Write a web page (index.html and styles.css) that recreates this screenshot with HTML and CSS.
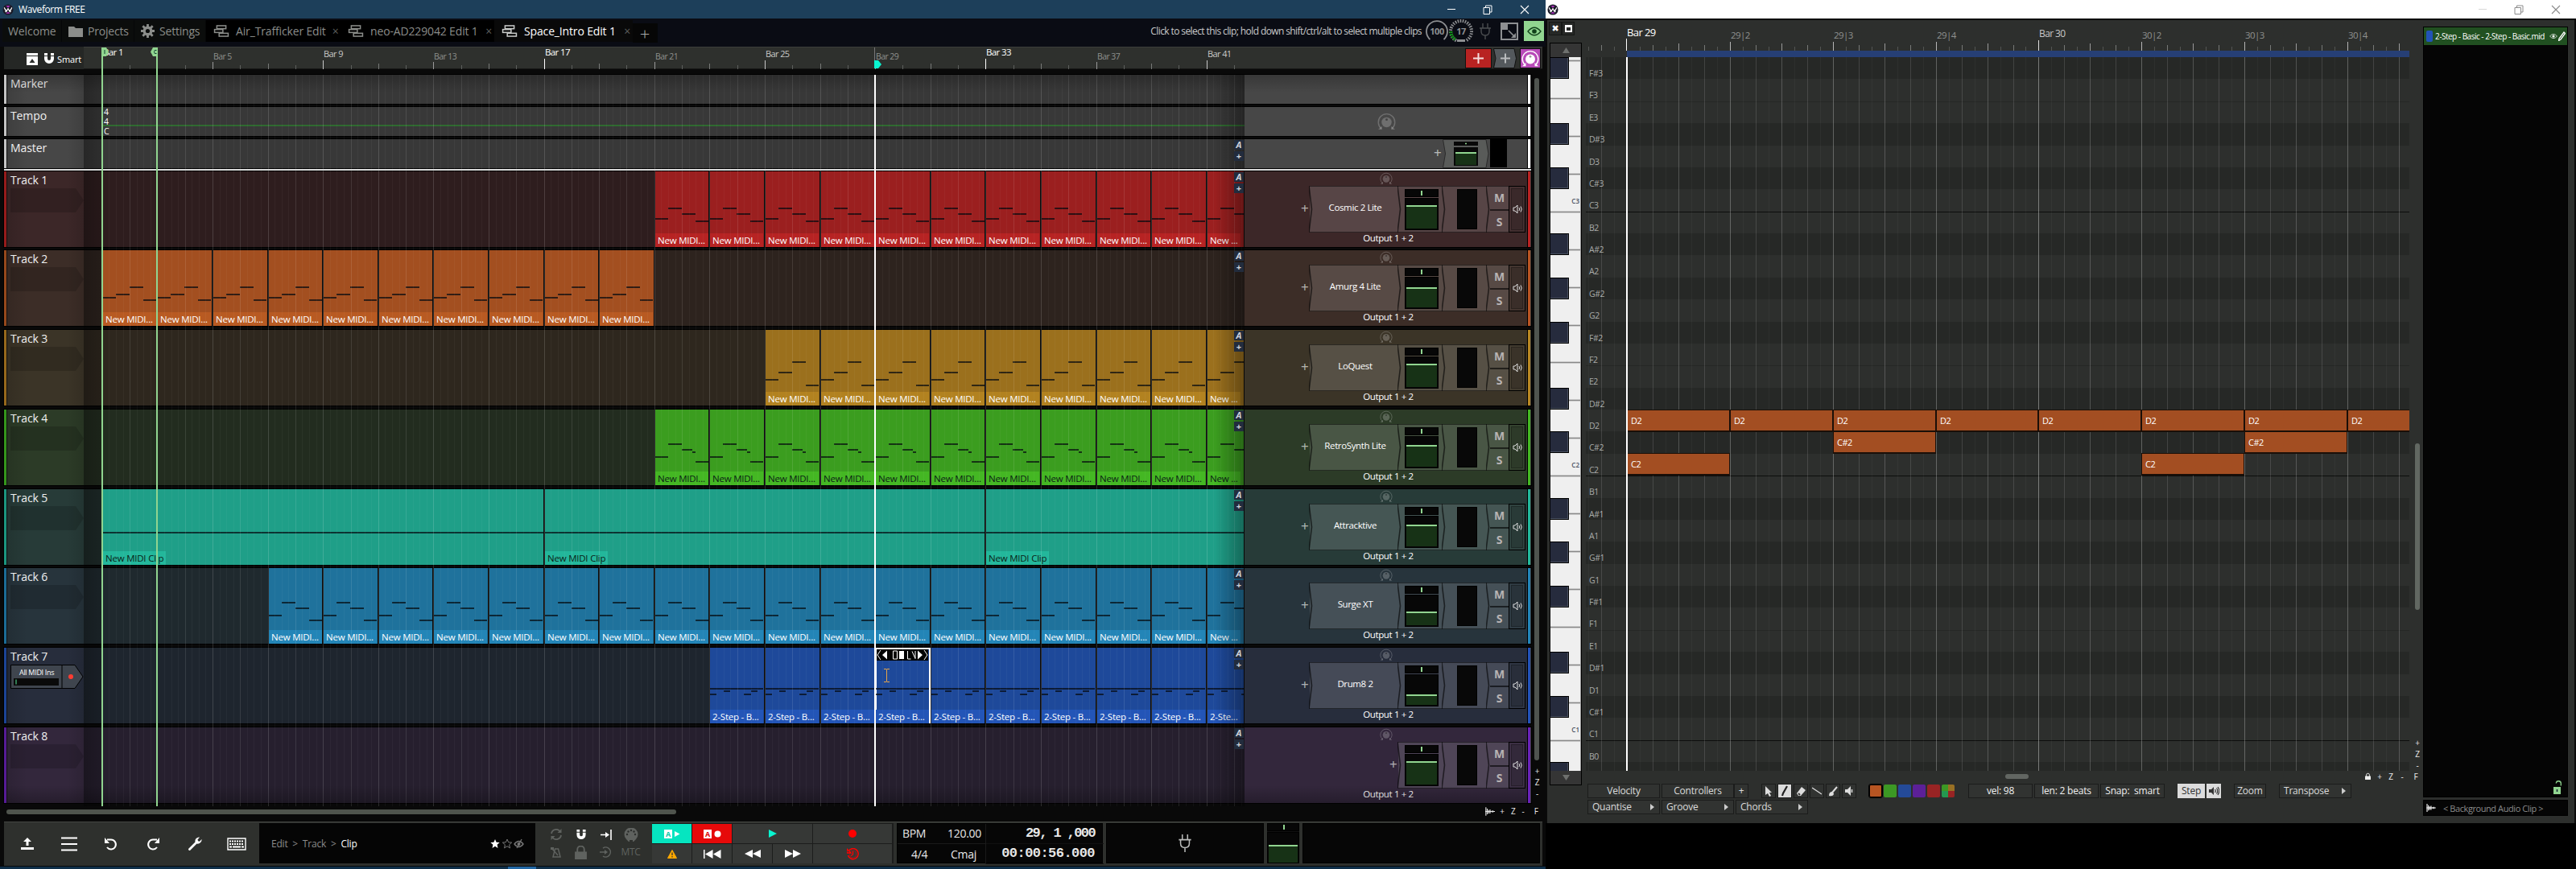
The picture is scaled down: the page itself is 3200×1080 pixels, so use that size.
FILE: index.html
```html
<!DOCTYPE html>
<html lang="en">
<head>
<meta charset="utf-8">
<title>Waveform FREE</title>
<link rel="stylesheet" href="styles.css">
</head>
<body>
<svg class="defs" width="0" height="0">
  <symbol id="i-logo" viewBox="0 0 16 16"><circle cx="8" cy="8" r="7.500" fill="#1b1b28"/><path d="M5 2.500h6L8 5z" fill="#c12fd0"/><path d="M5 13.500h6L8 11z" fill="#c12fd0"/><path d="M2.500 5l3 6L8 6.500l2.500 4.500 3-6M4 11l1.500-3M12 11l-1.500-3" fill="none" stroke="#fff" stroke-width="1.300"/></symbol>
  <symbol id="i-knob" viewBox="0 0 24 24"><circle cx="12" cy="12.500" r="6.500" fill="currentColor"/><circle cx="12" cy="9" r="1.500" class="knob-dot"/><path d="M5 20.500A10.700 10.700 0 1 1 19 20.500" fill="none" stroke="currentColor" stroke-width="1.500"/><path d="M1 22h5v-4.500zM23 22h-5v-4.500z" fill="currentColor"/></symbol>
  <symbol id="i-tracks" viewBox="0 0 20 16"><g fill="none" stroke="currentColor" stroke-width="1.600"><rect x="4" y="1" width="12" height="4"/><rect x="1" y="6" width="11" height="4"/><rect x="7" y="11" width="12" height="4"/></g></symbol>
  <symbol id="i-plug" viewBox="0 0 16 22"><path d="M5 1v6M11 1v6M1 7h14M3 7v4c0 3 2 5 5 5s5-2 5-5V7M8 16v5" fill="none" stroke="currentColor" stroke-width="1.400"/></symbol>
  <symbol id="i-eye" viewBox="0 0 18 12"><path d="M1 6q8-9.500 16 0q-8 9.500-16 0z" fill="none" stroke="currentColor" stroke-width="1.300"/><circle cx="9" cy="6" r="2.800" fill="currentColor"/></symbol>
  <symbol id="i-magnet" viewBox="0 0 14 14"><path d="M1 4v3a6 6 0 0 0 12 0V4H9v3a2 2 0 0 1-4 0V4zM1 0h4v3H1zM9 0h4v3H9z" fill="currentColor"/></symbol>
  <symbol id="i-speaker" viewBox="0 0 12 12"><path d="M1 4h2l3-3v10L3 8H1z" fill="none" stroke="currentColor"/><path d="M8 4q1.500 2 0 4M10 2.500q2.500 3.500 0 7" fill="none" stroke="currentColor"/></symbol>
  <symbol id="i-lock" viewBox="0 0 14 16"><path d="M0 7h14v9H0z" fill="currentColor"/><path d="M3 8V4.500a4 4 0 0 1 8 0V8" fill="none" stroke="currentColor" stroke-width="1.800"/></symbol>
  <symbol id="i-wave" viewBox="0 0 14 12"><path d="M1 0v12M3 2v8M5 4v5M7 3v6M9 5v2M11 4.500v3M13 5.500v1M0 6h14" fill="none" stroke="currentColor" stroke-width="1.300"/></symbol>
  <symbol id="i-restore" viewBox="0 0 12 12"><path d="M1 3.500h7.500V11.500H1zM3.500 3.500V1H11v8H8.500" fill="none" stroke="currentColor"/></symbol>
  <symbol id="i-close" viewBox="0 0 12 12"><path d="M1 1l10 10M11 1L1 11" fill="none" stroke="currentColor" stroke-width="1.100"/></symbol>
</svg>

<div class="desktop">
<section class="daw">
  <header class="titlebar">
    <svg class="logo"><use href="#i-logo"/></svg><span>Waveform FREE</span>
    <div class="winbtns"><i class="min"></i><svg><use href="#i-restore"/></svg><svg><use href="#i-close"/></svg></div>
  </header>

  <nav class="menubar">
    <div class="tab w1">Welcome</div>
    <div class="tab w2"><svg width="18" height="14" viewBox="0 0 18 14"><path d="M0 1h7l2 2h9v11H0z" fill="currentColor"/></svg>Projects</div>
    <div class="tab w3"><svg width="17" height="17" viewBox="0 0 18 18"><circle cx="9" cy="9" r="4.500" fill="none" stroke="currentColor" stroke-width="3.500"/><path d="M9 0v4M9 14v4M0 9h4M14 9h4M2.500 2.500l3 3M12.500 12.500l3 3M15.500 2.500l-3 3M5.500 12.500l-3 3" stroke="currentColor" stroke-width="3"/></svg>Settings</div>
    <div class="tab doc w4"><svg width="20" height="15"><use href="#i-tracks"/></svg>Air_Trafficker Edit<b>×</b></div>
    <div class="tab doc w5"><svg width="20" height="15"><use href="#i-tracks"/></svg>neo-AD229042 Edit 1<b>×</b></div>
    <div class="tab doc on w6"><svg width="20" height="15"><use href="#i-tracks"/></svg>Space_Intro Edit 1<b>×</b></div>
    <div class="tab add">+</div>
    <div class="status">
      <span class="hint">Click to select this clip; hold down shift/ctrl/alt to select multiple clips</span>
      <svg width="30" height="30" viewBox="0 0 30 30"><path d="M6.500 25A13 13 0 1 1 23.500 25" fill="none" stroke="#8d8f92" stroke-width="1.800"/><text x="15" y="19" class="gauge">100</text></svg>
      <svg width="30" height="30" viewBox="0 0 30 30"><path d="M9 26.500A13 13 0 1 1 21 26.500" fill="none" stroke="#8d8f92" stroke-width="4" stroke-dasharray="1.600 1.400"/><path d="M7.500 25A12.500 12.500 0 0 1 2.500 15" fill="none" stroke="#0a8a12" stroke-width="4" stroke-dasharray="2 1.200"/><path d="M10 25h10v3H10z" fill="#8d8f92"/><text x="15" y="19" class="gauge">17</text></svg>
      <svg class="plug" width="16" height="22"><use href="#i-plug"/></svg>
      <svg width="22" height="22" viewBox="0 0 22 22"><path d="M1 1h20v20H1z" fill="none" stroke="#8d8f92" stroke-width="2"/><path d="M1 1h8v8H1z" fill="#8d8f92"/><path d="M10 10l8 8" stroke="#8d8f92" stroke-width="1.700"/><path d="M13 19h6v-6z" fill="#8d8f92"/></svg>
      <div class="eyebtn"><svg width="18" height="12"><use href="#i-eye"/></svg></div>
    </div>
  </nav>

  <div class="ruler">
    <div class="snap">
      <svg width="14" height="15" viewBox="0 0 14 15"><path d="M0 0h14v3H0zM0 4h14v11H0z" fill="#fff"/><path d="M7 7l3.500 5h-7z" fill="#2d2f2d"/></svg>
      <svg width="14" height="14"><use href="#i-magnet"/></svg>Smart
    </div>
    <div class="ticks" id="ticks"></div>
    <div class="ruler-tools">
      <div class="rt red"><svg width="13" height="13" viewBox="0 0 13 13"><path d="M6.500 0v13M0 6.500h13" stroke="#fff" stroke-opacity=".85" stroke-width="2"/></svg></div>
      <svg width="29" height="25" viewBox="0 0 29 25"><path d="M.5.500H26l2.500 12L26 24.500H.500L3 12.500z" fill="#54595d" stroke="#111"/><path d="M15 6.500v12M9 12.500h12" stroke="#b9bcbe" stroke-width="2"/></svg>
      <div class="rt purple"><svg width="22" height="22"><use href="#i-knob"/></svg></div>
    </div>
  </div>

  <div class="arrange" id="arrange">
    <div class="rows" id="rows"></div>
    <div class="vscroll"><i></i><b>+</b><b>Z</b><b>-</b></div>
  </div>
  <div class="hscroll"><i></i><span class="zoomset"><svg width="12" height="11"><use href="#i-wave"/></svg><b>+</b><b>Z</b><b>-</b><b class="f">F</b></span></div>

  <footer class="transport">
    <div class="actions">
      <svg width="16" height="16" viewBox="0 0 16 16"><path d="M0 12h16v3H0zM8 0l5 5H9.500v5h-3V5H3z" fill="#fff"/></svg>
      <svg width="20" height="18" viewBox="0 0 20 18"><path d="M0 1.500h20M0 9h20M0 16.500h20" stroke="#fff" stroke-width="1.800"/></svg>
      <svg width="18" height="18" viewBox="0 0 18 18"><path d="M4 3.500h4.500a6 6 0 1 1-4.500 9.500" fill="none" stroke="#fff" stroke-width="2"/><path d="M1 1v7h6z" fill="#fff"/></svg>
      <svg width="18" height="18" viewBox="0 0 18 18"><path d="M14 3.500H9.500a6 6 0 1 0 4.500 9.500" fill="none" stroke="#fff" stroke-width="2"/><path d="M17 1v7h-6z" fill="#fff"/></svg>
      <svg width="18" height="18" viewBox="0 0 18 18"><path d="M1.500 14.500l8-8a5 5 0 0 1 5.500-6l-2.500 3 .5 1.800 2 .4L17.500 3a5 5 0 0 1-6 5.500l-8 8a1.400 1.400 0 0 1-2-2z" fill="#fff"/></svg>
      <svg width="24" height="16" viewBox="0 0 24 16"><path d="M1 1h22v14H1z" fill="none" stroke="#fff" stroke-width="1.400"/><path d="M3 4.500h18M3 8h18" stroke="#fff" stroke-width="2" stroke-dasharray="2 1"/><path d="M3 11.500h3M7 11.500h10M18 11.500h3" stroke="#fff" stroke-width="2"/></svg>
    </div>
    <div class="crumbs"><span>Edit&nbsp; &gt; &nbsp;Track&nbsp; &gt; &nbsp;<em>Clip</em></span>
      <svg width="42" height="14" viewBox="0 0 42 14"><path d="M6 1l1.600 3.800 4.100.3-3.100 2.700.9 4.100L6 9.700l-3.500 2.200.9-4.100L.300 5.100l4.100-.3z" fill="#fff"/><path d="M21 1l1.600 3.800 4.100.3-3.100 2.700.9 4.100L21 9.700l-3.500 2.200.9-4.100-3.100-2.700 4.100-.3z" fill="none" stroke="#777"/><path d="M30 7q5.500-7 11 0q-5.500 7-11 0zM33 12l6-11" fill="none" stroke="#777" stroke-width="1.300"/><circle cx="35.500" cy="7" r="2" fill="#777"/></svg>
    </div>
    <div class="modes">
      <svg width="14" height="14" viewBox="0 0 14 14"><path d="M1 6a6 6 0 0 1 10.500-3M13 8a6 6 0 0 1-10.500 3" fill="none" stroke="#5f625f" stroke-width="1.800"/><path d="M13.500 0v5h-5zM.500 14V9h5z" fill="#5f625f"/></svg>
      <svg class="lit" width="14" height="13"><use href="#i-magnet"/></svg>
      <svg width="14" height="13" viewBox="0 0 14 13"><path d="M0 6.500h9M13 0v13" stroke="#fff" stroke-width="1.600"/><path d="M6 3l5 3.500L6 10z" fill="#fff"/></svg>
      <svg width="18" height="17" viewBox="0 0 18 17"><path d="M3 14a8.500 8.500 0 1 1 12 0l-3 3h-1v-2H7v2H6z" fill="#5f625f"/><g fill="#2d2f2d"><circle cx="4" cy="8" r="1.200"/><circle cx="5.500" cy="4.500" r="1.200"/><circle cx="9" cy="3" r="1.200"/><circle cx="12.500" cy="4.500" r="1.200"/><circle cx="14" cy="8" r="1.200"/></g></svg>
      <svg width="14" height="14" viewBox="0 0 14 14"><path d="M3 13h9L9.500 3h-4zM2 3l7 8" fill="none" stroke="#5f625f" stroke-width="1.500"/><path d="M0 1h4v3H0z" fill="#5f625f"/></svg>
      <svg class="dim" width="15" height="17"><use href="#i-lock"/></svg>
      <svg width="15" height="14" viewBox="0 0 15 14"><path d="M4 2a6 6 0 1 1 0 10" fill="none" stroke="#5f625f" stroke-width="1.500"/><path d="M0 7h8" stroke="#5f625f" stroke-width="1.500"/><path d="M6 4l4 3-4 3z" fill="#5f625f"/></svg>
      <span>MTC</span>
    </div>
    <div class="buttons">
      <div class="cyan"><svg width="20" height="11" viewBox="0 0 20 11"><path d="M0 0h10v11H0zM13 2l6.500 3.500L13 9z" fill="#fff"/><text x="5" y="9" class="aa" fill="#06c8a8">A</text></svg></div>
      <div class="redb"><svg width="22" height="11" viewBox="0 0 22 11"><path d="M0 0h10v11H0z" fill="#fff"/><circle cx="17.500" cy="5.500" r="4" fill="#fff"/><text x="5" y="9" class="aa" fill="#d00">A</text></svg></div>
      <div class="w"><svg width="10" height="10" viewBox="0 0 10 10"><path d="M0 0l10 5-10 5z" fill="#09f5d0"/></svg></div>
      <div class="w"><svg width="10" height="10" viewBox="0 0 10 10"><circle cx="5" cy="5" r="5" fill="#f00"/></svg></div>
      <div><svg width="12" height="11" viewBox="0 0 12 11"><path d="M6 .500l5.500 10H.500z" fill="#ffa800" stroke="#ffa800"/><path d="M6 3.500v3.500M6 8v1.500" stroke="#333" stroke-width="1.300"/></svg></div>
      <div><svg width="22" height="11" viewBox="0 0 22 11"><path d="M0 0h1.500v11H0zM11.500 0v11L2 5.500zM21.500 0v11L12 5.500z" fill="#fff"/></svg></div>
      <div><svg width="20" height="10" viewBox="0 0 20 10"><path d="M10 0v10L0 5zM20 0v10L10 5z" fill="#fff"/></svg></div>
      <div><svg width="20" height="10" viewBox="0 0 20 10"><path d="M0 0v10l10-5zM10 0v10l10-5z" fill="#fff"/></svg></div>
      <div class="w"><svg width="15" height="15" viewBox="0 0 15 15"><path d="M2 4a6.500 6.500 0 1 1-.5 5" fill="none" stroke="#f00" stroke-width="1.500"/><circle cx="7.500" cy="7.500" r="4.300" fill="none" stroke="#f00" stroke-dasharray="1 1.200"/><path d="M0 1v5h5zM7.500 4v4L5 9.500" fill="none" stroke="#f00" stroke-width="1.300"/></svg></div>
    </div>
    <div class="clock">
      <div class="bpm"><span>BPM</span><span>120.00</span></div><div class="lcd pos">29, 1 ,000</div>
      <div class="sig"><span>4/4</span><span>Cmaj</span></div><div class="lcd">00:00:56.000</div>
    </div>
    <div class="well plugwell"><svg width="18" height="24"><use href="#i-plug"/></svg></div>
    <div class="mfader"><div class="pan"></div><div class="vol"><i style="top:15px"></i></div></div>
    <div class="well"></div>
  </footer>
  <div class="taskbar"><i></i></div>
</section>

<section class="editor">
  <header class="titlebar light">
    <svg class="logo"><use href="#i-logo"/></svg>
    <div class="winbtns"><i class="min"></i><svg><use href="#i-restore"/></svg><svg><use href="#i-close"/></svg></div>
  </header>
  <div class="editor-body">
    <div class="piano-col">
      <div class="minibtns"><span>✖</span><span><i></i></span></div>
      <div class="keys">
        <div class="kbtn"><svg width="9" height="7" viewBox="0 0 9 7"><path d="M4.500 0L9 7H0z" fill="#6e706e"/></svg></div>
        <div class="keybed" id="keybed"></div>
        <div class="kbtn"><svg width="9" height="7" viewBox="0 0 9 7"><path d="M0 0h9L4.500 7z" fill="#6e706e"/></svg></div>
      </div>
    </div>
    <div class="grid-col">
      <div class="eruler" id="eruler"></div>
      <div class="cliprange"></div>
      <div class="egrid" id="egrid"></div>
      <div class="ehscroll"><i></i><svg width="7" height="10"><use href="#i-lock"/></svg><b>+</b><b>Z</b><b>-</b><b>F</b></div>
      <div class="tools">
        <div class="btn">Velocity</div><div class="btn t2">Controllers</div><div class="btn sm">+</div>
        <div class="icons">
          <span><svg width="8" height="13" viewBox="0 0 8 13"><path d="M0 0l8 8H5l2 4-2 1-2-4-3 2z" fill="#ddd"/></svg></span>
          <span class="on"><svg width="10" height="14" viewBox="0 0 10 14"><path d="M8 1L3 10l-1 3" stroke="#222" stroke-width="2.200" fill="none"/></svg></span>
          <span><svg width="13" height="13" viewBox="0 0 13 13"><path d="M7 1l5 4-6 7H3L1 9z" fill="#ddd"/><path d="M3 9l2 2" stroke="#333" stroke-width="2"/></svg></span>
          <span><svg width="12" height="10" viewBox="0 0 12 10"><path d="M0 1l12 8" stroke="#ddd" stroke-width="1.400"/></svg></span>
          <span><svg width="12" height="13" viewBox="0 0 12 13"><path d="M11 1L5 8" stroke="#ddd" stroke-width="2"/><path d="M1 12q0-5 4-5l2 2q0 4-6 3z" fill="#ddd"/></svg></span>
          <span><svg width="11" height="12" viewBox="0 0 11 12"><path d="M0 4h3l4-4v12L3 8H0z" fill="#ddd"/><path d="M8.500 4v4" stroke="#ddd" stroke-width="1.500"/></svg></span>
        </div>
        <div class="swatches"><i class="s1"></i><i class="s2"></i><i class="s3"></i><i class="s4"></i><i class="s5"></i><i class="s6"></i></div>
        <div class="btn v">vel: 98</div><div class="btn v">len: 2 beats</div><div class="btn v">Snap:&nbsp; smart</div>
        <div class="btn step">Step</div><div class="btn spk"><svg width="13" height="12" viewBox="0 0 13 12"><path d="M0 4h3l3-3v10L3 8H0z" fill="#333"/><path d="M7.500 4q1.500 2 0 4M9.500 2.500q2.500 3.500 0 7M11 1q3.500 5 0 10" fill="none" stroke="#333" stroke-width="1.200"/></svg></div>
        <div class="btn zm">Zoom</div><div class="btn menu tr">Transpose</div>
      </div>
      <div class="tools"><div class="btn menu">Quantise</div><div class="btn menu">Groove</div><div class="btn menu">Chords</div></div>
    </div>
    <div class="evscroll"><i></i><div><b>+</b><b>Z</b><b>-</b></div></div>
    <aside class="cliplist">
      <div class="listbox">
        <div class="item"><i></i><span>2-Step - Basic - 2-Step - Basic.mid</span><svg width="10" height="8"><use href="#i-eye"/></svg><svg width="9" height="12" viewBox="0 0 9 12"><path d="M7 1l1.500 1.500L3 10l-2.500 1.500L1 9z" fill="none" stroke="#fff" stroke-width="1.300"/></svg></div>
        <svg class="unlock" width="10" height="17" viewBox="0 0 10 17"><path d="M0 8h9v9H0z" fill="#91d590"/><path d="M9.300 6.500V4a3 3 0 0 0-6-.5" fill="none" stroke="#91d590" stroke-width="1.300"/><path d="M4.500 11v3" stroke="#123" stroke-width="1.500"/></svg>
      </div>
      <div class="bgclip"><svg width="12" height="10"><use href="#i-wave"/></svg>&lt; Background Audio Clip &gt;</div>
    </aside>
  </div>
</section>
</div>
<script src="app.js"></script>
</body>
</html>
```
FILE: styles.css
```css
* { box-sizing: border-box; }
html, body { margin: 0; background: #000; }
body {
  width: 3200px; height: 1080px; overflow: hidden;
  font-family: "Open Sans", "Noto Sans", sans-serif;
  font-size: 12px; color: #e8e8e8; line-height: 1;
}
.defs { position: absolute; }
b { font-weight: 400; }
svg { display: block; flex: none; }
.desktop { display: flex; width: 3200px; height: 1080px; }
.daw { width: 1920px; height: 1080px; background: #090909; display: flex; flex-direction: column; overflow: hidden; }
.editor { width: 1280px; height: 1080px; display: flex; flex-direction: column; background: #000; }

/* window title bars */
.titlebar { height: 23px; flex: none; background: #1d3f5a; display: flex; align-items: center; padding-left: 3px; color: #fff; font-size: 12px; letter-spacing: -.4px; }
.titlebar .logo { width: 14px; height: 16px; margin-right: 6px; }
.titlebar.light { background: #fff; color: #8b8b8b; padding-left: 2px; }
.winbtns { margin-left: auto; display: flex; align-items: center; margin-right: 20px; height: 20px; }
.winbtns svg { width: 12px; height: 12px; margin-left: 34px; }
.winbtns .min { width: 10px; height: 1px; background: currentColor; }
.light .winbtns { margin-right: 19px; }
.light .min { opacity: .35; }

/* tabs */
.menubar { height: 35px; flex: none; background: #0a0c14; display: flex; padding: 2px 2px 0 3px; }
.tab { height: 27px; display: flex; align-items: center; gap: 6px; background: #0b0d0c; color: #8b8d8a; font-size: 14px; letter-spacing: -.2px; white-space: nowrap; border-right: 1px solid #050607; }
.tab b { margin-left: auto; font-size: 14px; padding-right: 3px; color: #5c5e5c; }
.tab.doc { background: #000; border-right: 0; gap: 8px; padding-left: 9px; letter-spacing: -.15px; }
.tab.on { background: #090909; color: #fff; }
.tab.on svg { color: #c9cbc9; }
.w1 { width: 74px; padding-left: 7px; letter-spacing: -.1px; }
.w2 { width: 90px; padding-left: 8px; }
.w3 { width: 89px; padding-left: 8px; }
.w4 { width: 167px; }
.w5 { width: 191px; }
.w6 { width: 172px; }
.tab.add { margin: 4px 0 0; width: 31px; height: 24px; justify-content: center; background: #060606; font-size: 22px; font-weight: 300; color: #aaa; }
.status { margin-left: auto; height: 27px; display: flex; align-items: center; color: #c9cacb; }
.hint { font-size: 12px; letter-spacing: -.6px; margin-right: 4px; white-space: nowrap; }
.gauge { font-size: 11px; font-weight: 700; fill: #8d8f92; text-anchor: middle; letter-spacing: -.5px; }
.plug { color: #4b4d50; margin: 0 11px 0 7px; }
.eyebtn { width: 25px; height: 25px; margin-left: 7px; background: #91d590; color: #10401a; display: flex; align-items: center; justify-content: center; }

/* timeline ruler */
.ruler { height: 28px; width: 1911px; margin-left: 5px; flex: none; background: #2e302d; display: flex; box-shadow: inset 0 1px #3b3d3a, inset 0 -1px #161716; }
.snap { width: 99px; height: 28px; background: #252725; display: flex; align-items: center; padding: 2px 0 0 28px; gap: 7px; font-size: 11px; color: #fff; letter-spacing: -.15px; }
.snap svg + svg { margin-right: -4px; }
.ticks { position: relative; width: 1442px; height: 28px; }
.ticks i { position: absolute; bottom: 0; width: 1px; }
.ticks span, .eruler span { position: absolute; white-space: nowrap; line-height: 14px; }
.ruler-tools { margin-left: auto; padding: 2px 2px 0 0; display: flex; }
.rt { height: 25px; display: flex; align-items: center; justify-content: center; border: 1px solid #111; color: #fff; }
.rt.red { width: 33px; background: #b82322; margin-right: 2px; }
.rt.purple { width: 26px; background: #b84ab8; margin-left: 4px; }
.knob-dot { fill: #0006; }

/* arrangement */
.arrange { height: 909px; flex: none; display: flex; padding: 7px 0 0 5px; }
.rows { position: relative; width: 1897px; height: 909px; }
.row { display: flex; height: 36px; background: #3a3a3a; outline: 1px solid #000; }
.row.track { height: 94px; }
.strip { width: 4px; border-right: 1px solid #111; background: var(--strip); }
.head { width: 95px; background: linear-gradient(90deg, rgba(0,0,0,.12), transparent 25px, transparent 75px, rgba(0,0,0,.12)) var(--head); padding: 2px 0 0 4px; font-size: 14px; line-height: 18px; color: #f0f0f0; letter-spacing: -.1px; }
.slot { display: block; margin-top: 1px; }
.lane { position: relative; width: 1442px; background: var(--row); overflow: hidden; }
.side { width: 351px; background: var(--head); position: relative; }
.endstrip { width: 4px; border-left: 1px solid #000; background: var(--end); }
.clip { position: absolute; top: 0; height: 94px; background: var(--clip); border-left: 1px solid #0c0c0c; border-right: 1px solid #0c0c0c; }
.clip .nm { position: absolute; left: 0; bottom: 0; height: 17px; padding: 0 3px 0 3px; background: var(--label); font-size: 11.500px; line-height: 17px; white-space: nowrap; letter-spacing: -.22px; color: #fff; }
.clip .nm.dk { color: #0a2015; }
.clip .nt { position: absolute; height: 2px; background: rgba(5,10,15,.72); }
.clip.sel { outline: 2px solid #fff; outline-offset: -2px; z-index: 2; }
.selbar { position: absolute; left: 1px; top: 2px; height: 14px; background: #000; }
.ibeam { position: absolute; left: 9px; top: 26px; }
.tempo-line { position: absolute; left: 23px; right: 0; top: 22px; height: 2px; background: #2f6a30; }
.sigs { position: absolute; left: 25px; top: 0; font-size: 10.500px; line-height: 12px; color: #fff; }
.shade { position: absolute; top: 0; bottom: 0; left: 99px; width: 1442px; pointer-events: none;
  background: linear-gradient(90deg, rgba(0,0,0,.3), rgba(0,0,0,.18) 22px, transparent 23px, transparent 1405px, rgba(0,0,0,.35)); z-index: 3; }
.gridlines { position: absolute; left: 99px; top: 0; z-index: 3; }
.fade { position: absolute; left: 4px; width: 1889px; height: 22px; z-index: 3; }
.fade.t { top: 0; background: linear-gradient(rgba(0,0,0,.22), transparent); }
.fade.b { top: 883px; background: linear-gradient(transparent, rgba(0,0,0,.25)); }
.ab { position: absolute; left: 1528px; z-index: 4; width: 12px; color: #cfd3da; font-size: 11px; text-align: center; }
.ab b { display: block; height: 12px; line-height: 12px; margin-bottom: 2px; background: #222c3d; font-weight: 700; }
.ab b:first-child { font-style: italic; }
.divider { position: absolute; left: 0; top: 117px; width: 1897px; height: 2px; background: #d8d8d8; z-index: 4; }
.cursor { position: absolute; z-index: 5; top: -34px; width: 2px; height: 943px; background: #91d590; }
.cursor.play { background: #fff; top: 0; height: 909px; }
.flag { position: absolute; z-index: 6; top: -34px; color: #143; }
.knob { position: absolute; color: rgba(255,255,255,.22); }
.pchain { position: absolute; top: 18px; right: 2px; height: 58px; display: flex; color: #fff; }
.pchain > div { position: relative; background: rgba(255,255,255,.14); border-top: 1px solid rgba(0,0,0,.5); border-bottom: 1px solid rgba(0,0,0,.5); height: 58px; }
.pchain .sep { position: absolute; left: -1px; top: -1px; z-index: 1; }
.p-name { width: 110px; padding-left: 3px; text-align: center; line-height: 51px; font-size: 11.500px; letter-spacing: -.38px; }
.p-fader { width: 55px; padding: 3px 0 0 8px; }
.p-meter { width: 55px; padding: 3px 0 0 18px; }
.p-meter i { display: block; width: 25px; height: 50px; background: #080808; border: 1px solid #000; }
.p-ms { width: 27px; padding-left: 4px; color: #b8b3b3; font-weight: 700; font-size: 14px; text-align: center; }
.p-ms b { display: block; height: 28px; line-height: 28px; font-weight: 700; }
.p-ms b + b { border-top: 2px solid rgba(0,0,0,.6); }
.pchain .p-spk { width: 21px; border: 1px solid #000; background: rgba(255,255,255,.04); padding: 2px; }
.p-spk div { height: 52px; border: 1px solid rgba(0,0,0,.25); background: rgba(0,0,0,.12); display: flex; align-items: center; justify-content: center; color: #ddd; }
.pan { width: 42px; height: 10px; background: #070707; border: 1px solid #000; position: relative; }
.pan::after { content: ""; position: absolute; left: 19px; top: 1px; width: 2px; height: 6px; background: #91d590; }
.vol { margin-top: 1px; width: 42px; height: 40px; background: #070707; border: 1px solid #000; position: relative; }
.vol i { position: absolute; left: 1px; right: 1px; bottom: 1px; background: #173216; border-top: 2px solid #91d590; }
.plus { position: absolute; font-size: 17px; line-height: 18px; color: rgba(255,255,255,.65); }
.out { position: absolute; left: 0; width: 357px; top: 76px; text-align: center; font-size: 11.500px; line-height: 14px; letter-spacing: -.36px; color: #fff; }
.master-fader { position: absolute; left: 246px; top: 0; }
.master-meter { position: absolute; left: 305px; top: 0; width: 21px; height: 35px; background: #000; }
.allmidi { font-size: 9px; letter-spacing: -.3px; fill: #fff; }

.vscroll { width: 18px; padding: 4px 0 0 4px; display: flex; flex-direction: column; }
.vscroll i { display: block; width: 6px; height: 854px; background: #4f544f; border-radius: 3px; margin-bottom: 8px; }
.vscroll b { font-size: 10px; height: 14px; width: 7px; text-align: center; }
.hscroll { height: 26px; flex: none; padding: 11px 9px 0 8px; display: flex; }
.hscroll > i { width: 832px; height: 6px; border-radius: 3px; background: #4f544d; }
.zoomset { margin-left: auto; display: flex; font-size: 10px; margin-top: -3px; }
.zoomset b { margin-left: 6px; }
.zoomset b + b { margin-left: 8px; }
.zoomset b.f { margin-left: 12px; }

/* transport */
.transport { height: 55px; width: 1911px; margin-left: 5px; flex: none; background: #2e302d; border-top: 1px solid #444643; display: flex; padding: 1px 2px 0 0; align-items: flex-start; }
.actions { width: 317px; height: 51px; display: grid; grid-template-columns: repeat(6, 52px); padding-left: 3px; align-items: center; justify-items: center; }
.crumbs { width: 343px; height: 50px; background: #050505; display: flex; align-items: center; justify-content: space-between; padding: 2px 14px 0 15px; font-size: 12px; letter-spacing: -.2px; color: #8b8b8b; }
.crumbs em { font-style: normal; color: #fff; }
.modes { width: 145px; height: 50px; display: grid; grid-template-columns: repeat(4, 31px); grid-template-rows: 22px 22px; padding: 3px 0 0 10px; align-items: center; justify-items: center; font-size: 12px; color: #5f625f; letter-spacing: -.4px; }
.modes .lit { color: #fff; }
.modes .dim { color: #5f625f; }
.buttons { width: 300px; height: 50px; display: grid; grid-template-columns: 49px 49px 49px 49px 98px; grid-template-rows: 24px 24px; gap: 1px; background: #1c1d1c; border: 1px solid #1c1d1c; border-left: 0; }
.buttons div { background: #363836; display: flex; align-items: center; justify-content: center; }
.buttons .w:nth-child(3) { grid-column: span 2; }
.buttons .cyan { background: #06e5c0; }
.buttons .redb { background: #e60a0a; }
.aa { font-size: 9px; font-weight: 700; text-anchor: middle; }
.clock { width: 256px; height: 50px; margin-left: 4px; background: #060606; display: grid; grid-template-columns: 110px 146px; grid-template-rows: 25px 25px; font-size: 14px; color: #e8e8e8; border: 1px solid #000; letter-spacing: -.3px; }
.bpm, .sig { display: flex; justify-content: space-between; align-items: center; padding: 0 5px 0 6px; border-right: 1px solid #1a1a1a; border-bottom: 1px solid #1a1a1a; }
.sig { padding: 0 11px 0 17px; border-bottom: 0; }
.lcd { font: 700 17px/24px "Liberation Mono", monospace; letter-spacing: -.55px; text-align: right; padding-right: 11px; white-space: pre; border-bottom: 1px solid #111; }
.lcd.pos { letter-spacing: -1.600px; }
.well { width: 295px; height: 50px; background: #060606; border: 1px solid #000; margin-left: 4px; }
.plugwell { width: 196px; display: flex; align-items: center; justify-content: center; color: #b9bab9; }
.mfader { width: 40px; height: 50px; margin-left: 4px; background: #111; }
.mfader .pan, .mfader .vol { width: 40px; }
.mfader .vol { height: 39px; }
.mfader .vol i { bottom: 0; }
.taskbar { height: 3px; margin-top: 1px; flex: none; background: #0f2f49; }
.taskbar i { display: block; width: 35px; height: 3px; margin-left: 631px; background: #2368a5; }

/* MIDI editor */
.editor-body { height: 1000px; background: #2d2f2d; border: 2px solid #0a0a0a; border-bottom: 0; display: flex; }
.piano-col { width: 48px; padding: 2px 0 0 2px; }
.minibtns { display: flex; width: 32px; height: 17px; }
.minibtns span { width: 16px; height: 17px; border: 1px solid #161716; background: #262826; display: flex; align-items: center; justify-content: center; color: #fff; font: 11px "DejaVu Sans", sans-serif; }
.minibtns i { width: 9px; height: 9px; border: 2px solid #fff; border-top-width: 3px; }
.keys { width: 40px; margin-top: 9px; margin-left: 1px; border: 1px solid #000; }
.kbtn { height: 17px; background: #353535; display: flex; align-items: center; justify-content: center; }
.keybed { position: relative; height: 887px; background: #efefef; overflow: hidden; border-right: 1px solid #999; }
.keybed i { position: absolute; left: 0; right: 0; height: 3px; background: #888; border: solid #ccc; border-width: 1px 0; }
.keybed u { position: absolute; left: 0; width: 23px; height: 27px; background: #262b3d; border: 1px solid #000; border-left: 0; box-shadow: inset -1px -1px #49505f; }
.keybed span { position: absolute; right: 1px; font-size: 8px; font-weight: 600; color: #4a5060; }
.grid-col { width: 1023px; display: flex; flex-direction: column; }
.eruler { position: relative; height: 38px; }
.eruler i { position: absolute; bottom: 0; width: 1px; }
.cliprange { height: 8px; margin-left: 51px; background: #263f75; }
.egrid { position: relative; height: 887px; overflow: hidden; }
.prow { position: absolute; left: 0; right: 0; font-size: 10.500px; letter-spacing: -.5px; color: #a9aba9; padding: 15px 0 0 4px; }
.prow.blk { background: #262826; }
.egrid svg { position: absolute; left: 0; top: 0; }
.note { position: absolute; height: 28px; background: #a34e22; border: 1px solid #1a0f08; border-bottom-width: 2px; color: #fff; font-size: 11px; letter-spacing: -.5px; line-height: 25px; padding-left: 4px; }
.eplay { position: absolute; left: 50px; top: 0; width: 2px; height: 887px; background: #fff; }
.ehscroll { width: 1053px; height: 16px; display: flex; padding: 4px 0 0 521px; font-size: 10px; color: #eee; }
.ehscroll i { width: 29px; height: 6px; border-radius: 3px; background: #626662; margin-right: 418px; }
.ehscroll svg { margin-top: -2px; }
.ehscroll b { width: 14px; text-align: center; margin-top: -2px; }
.ehscroll svg + b { margin-left: 4px; }
.ehscroll b:last-child { margin-left: 3px; }
.tools { height: 18px; margin: 0 0 2px 2px; display: flex; width: 1020px; }
.btn { width: 90px; height: 18px; margin-right: 2px; border: 1px solid #1b1c1b; background: #313331; font-size: 12px; letter-spacing: -.22px; color: #dcdcdc; text-align: center; line-height: 16px; flex: none; white-space: nowrap; display: block; }
.btn.t2 { margin-right: 0; }
.btn.sm { width: 18px; margin-right: 16px; }
.btn.v { width: 80px; color: #f0f0f0; }
.btn.step { width: 34px; margin-left: 14px; background: #dcdcdc; color: #333; border-color: #dcdcdc; }
.btn.spk { width: 18px; background: #dcdcdc; border-color: #dcdcdc; padding: 2px 0 0 2px; }
.btn.zm { width: 40px; margin: 0 16px 0 14px; }
.btn.menu { text-align: left; padding: 0 6px 0 5px; display: flex; justify-content: space-between; align-items: center; }
.btn.menu::after { content: ""; border: 4px solid transparent; border-left: 5px solid #ccc; border-right: 0; }
.icons { display: flex; gap: 2px; margin-right: 16px; }
.icons span { width: 18px; height: 18px; border: 1px solid #1b1c1b; background: #313331; display: flex; align-items: center; justify-content: center; }
.icons .on { background: #dcdcdc; }
.swatches { display: flex; gap: 2px; margin-right: 17px; }
.swatches i { width: 16px; height: 16px; margin-top: 1px; border-radius: 2px; }
.s1 { background: #b75522; border: 1px solid #000; outline: 1px solid #000; }
.s2 { background: #3c9824; } .s3 { background: #244a98; } .s4 { background: #5c2098; } .s5 { background: #982424; }
.s6 { background: conic-gradient(#987024 25%, #982424 0 50%, #249850 0 75%, #3c9824 0); }
.evscroll { width: 17px; height: 933px; display: flex; flex-direction: column; align-items: center; padding: 526px 0 0 3px; font-size: 10px; }
.evscroll i { width: 6px; height: 207px; flex: none; background: #626862; border-radius: 3px; }
.evscroll div { margin-top: 160px; display: flex; flex-direction: column; }
.evscroll b { height: 14px; text-align: center; }
.cliplist { width: 180px; margin-top: 8px; }
.listbox { height: 958px; background: #050505; border: 1px solid #000; position: relative; }
.item { height: 22px; background: #215021; display: flex; align-items: center; padding-left: 3px; font-size: 10px; letter-spacing: -.5px; color: #fff; white-space: nowrap; }
.item i { width: 8px; height: 14px; flex: none; background: #2253b7; margin-right: 3px; border-radius: 2px; }
.item span { width: 142px; }
.item svg + svg { margin-left: 1px; }
.unlock { position: absolute; right: 7px; bottom: 3px; }
.bgclip { height: 20px; margin-top: 3px; background: #050505; border: 1px solid #000; display: flex; align-items: center; gap: 9px; padding-left: 3px; font-size: 11px; letter-spacing: -.42px; color: #8b8b8b; }
.bgclip svg { color: #fff; }
```
FILE: app.js
```js
// Timeline geometry, in pixels from the left edge of a lane
const BAR = 34.3, ORIGIN = 22.8;
const barX = n => ORIGIN + (n - 1) * BAR;
const px = v => Math.round(v) + 'px';

function add(parent, tag, cls, style, text) {
  const e = document.createElement(tag);
  if (cls) e.className = cls;
  if (style) Object.assign(e.style, style);
  if (text != null) e.textContent = text;
  parent.appendChild(e);
  return e;
}

// ruler
const ticks = document.getElementById('ticks');
for (let n = 1; n <= 42; n++) {
  const k = n - 1, x = barX(n);
  let h = 5, c = '#5d5f5d';
  if (k % 16 === 0) { h = 13; c = '#fff'; }
  else if (k % 8 === 0) { h = 11; c = '#c8c8c8'; }
  else if (k % 4 === 0) { h = 9; c = '#9a9a9a'; }
  else if (k % 2 === 0) { h = 7; c = '#777977'; }
  add(ticks, 'i', '', { left: px(x), height: h + 'px', background: c });
  if (k % 4 === 0) {
    const s = k % 16 === 0 ? ['11.5px', '0px', '#fff'] : k % 8 === 0 ? ['11px', '2px', '#c8c8c8'] : ['10.5px', '5px', '#8e908e'];
    add(ticks, 'span', '', { left: px(x + 1), fontSize: s[0], top: s[1], color: s[2], letterSpacing: '-.6px' }, 'Bar ' + n);
  }
}

const four = (a, b, c, d) => [[0, 16, a], [16, 17, b], [33, 17, c], [50, 16, d]];
const drums = [[0, 66, 50], [0, 8, 57], [17, 8, 53], [42, 9, 57], [51, 8, 53]];
const MIDI = 'New MIDI...';
const tracks = [
  { name: 'Track 1', top: 120, c: ['#3c2728', '#2e1d1e', '#9b1f1f', '#b72323', '#961b1b', '#b92323'], first: 21, notes: four(58, 45, 52, 61), plug: 'Cosmic 2 Lite', lv: 9, text: MIDI },
  { name: 'Track 2', top: 218, c: ['#3c2d27', '#2d231e', '#a34f20', '#b85a22', '#96481b', '#b95523'], first: 1, last: 21, notes: four(58, 54, 45, 61), plug: 'Amurg 4 Lite', lv: 13, text: MIDI },
  { name: 'Track 3', top: 317, c: ['#3b3427', '#2e271e', '#9b701d', '#b28220', '#96681b', '#b98823'], first: 25, notes: four(61, 52, 39, 68), plug: 'LoQuest', lv: 9, text: MIDI },
  { name: 'Track 4', top: 416, c: ['#2c3b27', '#222c1f', '#3b9d1f', '#44b723', '#35961b', '#44b923'], first: 21, notes: [[0, 16, 58], [16, 17, 42], [33, 13, 49], [46, 4, 52], [50, 16, 64]], plug: 'RetroSynth Lite', lv: 11, text: MIDI, dk: 1 },
  { name: 'Track 5', top: 515, c: ['#273b38', '#1f2c2a', '#1f9f88', '#23b79b', '#1b9680', '#23b99c'], long: [1, 17, 33], plug: 'Attracktive', lv: 11, text: 'New MIDI Clip', dk: 1 },
  { name: 'Track 6', top: 613, c: ['#27343c', '#1f292e', '#1f729c', '#2385b7', '#1b6c96', '#2385b9'], first: 7, notes: four(58, 42, 49, 64), plug: 'Surge XT', lv: 21, text: MIDI },
  { name: 'Track 7', top: 712, c: ['#272d3c', '#1e252e', '#1e499a', '#2355b7', '#1b4496', '#2353b9'], first: 23, notes: drums, plug: 'Drum8 2', lv: 25, text: '2-Step - B...' },
  { name: 'Track 8', top: 811, c: ['#33273c', '#261f2e', '#5a1f9b', '#6a23b7', '#561b96', '#6a23b9'], plug: null, lv: 9 }
];

const rows = document.getElementById('rows');
const SLOT = '<svg class="slot" width="91" height="30"><path d="M0 0H81L91 15L81 30H0z" fill="rgba(0,0,0,.16)"/></svg>';
const MIDISLOT = '<svg class="slot" width="91" height="30" viewBox="0 0 91 30"><path d="M.5.5H80L90 15 80 29.500H.5z" fill="#3f454e" stroke="#000"/><path d="M64 0v30" stroke="#000"/><path d="M4 17h56v9H4z" fill="#0a0a0a"/><path d="M7 18.500v6" stroke="#3fa26b" stroke-width="1.500"/><circle cx="75" cy="15" r="3" fill="#ff3c32"/><text x="11" y="12.500" class="allmidi">All MIDI Ins</text></svg>';
const sep = '<svg class="sep" width="5" height="58"><path d="M0 0L3.500 29L0 58" fill="none" stroke="rgba(0,0,0,.6)" stroke-width="1.600"/></svg>';
const SELBAR = '<svg class="selbar" width="64" height="14" viewBox="0 0 64 14"><g fill="none" stroke="#fff"><path d="M5 1L1 7l4 6M59 1l4 6-4 6"/><path d="M20.500 2h5v10h-5zM38.500 2v10h4M44 2.500l4 9V2"/></g><path d="M13 1.500v11L7 7zM28 2h6v10h-6zM51 1.500v11L57 7z" fill="#fff"/></svg>';
const IBEAM = '<svg class="ibeam" width="9" height="17" viewBox="0 0 9 17"><path d="M1 .5h3l.5 1 .5-1h3M1 16.500h3l.5-1 .5 1h3M4.500 1v15" fill="none" stroke="#e8a64a"/></svg>';
const knob = (x, y, s) => `<svg class="knob" width="${s}" height="${s}" style="left:${x}px;top:${y}px"><use href="#i-knob"/></svg>`;

function baseRow(name, cls, c, marginTop) {
  const r = add(rows, 'div', 'row ' + cls, { marginTop: marginTop + 'px' });
  ['head', 'row', 'clip', 'label', 'strip', 'end'].forEach((k, i) => r.style.setProperty('--' + k, c[i]));
  add(r, 'div', 'strip');
  const head = add(r, 'div', 'head', null, name);
  const lane = add(r, 'div', 'lane');
  const side = add(r, 'div', 'side');
  add(r, 'div', 'endstrip');
  return { head, lane, side };
}
function autoButtons(y) {
  add(rows, 'div', 'ab', { top: y + 'px' }).innerHTML = '<b>A</b><b>+</b>';
}

const grey = ['#474747', '#383838', '#000', '#000', '#c4c4c4', '#fff'];
baseRow('Marker', '', grey, 0);
const tempo = baseRow('Tempo', '', grey, 4);
tempo.lane.innerHTML = '<div class="tempo-line"></div><div class="sigs">4<br>4<br>C</div>';
tempo.side.innerHTML = knob(165, 7, 23);
const master = baseRow('Master', '', grey, 4);
master.side.innerHTML = `<span class="plus" style="left:235px;top:8px">+</span>
<svg class="master-fader" width="58" height="36" viewBox="0 0 58 36"><path d="M.5.5H54L57 18 54 35.500H.5L3.500 18z" fill="#595b59" stroke="#2a2a2a"/><path d="M14 3h30v5H14zM14 10h30v23H14z" fill="#080808"/><path d="M16 18h26v14H16z" fill="#173216"/><path d="M16 17h26" stroke="#91d590" stroke-width="2"/><path d="M28 5.500h2" stroke="#91d590" stroke-width="1.500"/></svg><div class="master-meter"></div>`;
autoButtons(81);

let bottom = 116;
tracks.forEach((t, ti) => {
  const r = baseRow(t.name, 'track', t.c, t.top - bottom);
  bottom = t.top + 94;
  r.head.insertAdjacentHTML('beforeend', ti === 6 ? MIDISLOT : SLOT);
  const starts = t.long || [];
  if (t.first) for (let b = t.first; b < (t.last || 42); b += 2) starts.push(b);
  starts.forEach(b => {
    const x = Math.round(barX(b)), end = Math.min(Math.round(barX(b + (t.long ? 16 : 2))), 1442);
    const sel = ti === 6 && b === 29;
    const clip = add(r.lane, 'div', 'clip' + (sel ? ' sel' : ''), { left: x + 'px', width: end - x + 'px' });
    if (t.long) add(clip, 'i', 'nt', { left: 0, width: '100%', top: '53px' });
    else t.notes.forEach(n => {
      if (x + n[0] < 1442) add(clip, 'i', 'nt', { left: n[0] + 'px', width: Math.min(n[1], end - x - n[0]) + 'px', top: n[2] + 'px' });
    });
    let label = t.text;
    if (b === 41 && !t.long) label = ti === 6 ? '2-Ste...' : 'New ...';
    const nm = add(clip, 'span', 'nm' + (t.dk ? ' dk' : ''), null, label);
    if (!t.long) nm.style.width = (b === 41 ? 41 : 66) + 'px';
    if (sel) clip.insertAdjacentHTML('beforeend', SELBAR + IBEAM);
  });
  r.side.innerHTML = knob(168, 1, 16) +
    `<span class="plus" style="left:${t.plug ? 70 : 180}px;top:37px">+</span>
     <div class="pchain">${t.plug ? `<div class="p-name">${sep}${t.plug}</div>` : ''}
     <div class="p-fader">${sep}<div class="pan"></div><div class="vol"><i style="top:${t.lv - 1}px"></i></div></div>
     <div class="p-meter">${sep}<i></i></div><div class="p-ms">${sep}<b>M</b><b>S</b></div>
     <div class="p-spk"><div><svg width="12" height="12"><use href="#i-speaker"/></svg></div></div></div>
     <div class="out">Output 1 + 2</div>`;
  autoButtons(t.top + 1);
});

// vertical bar and beat lines over every lane
let lines = '';
for (let q = 0; barX(1) + q * BAR / 4 < 1442; q++) {
  const x = Math.round(barX(1) + q * BAR / 4);
  const o = q % 8 === 0 ? .15 : q % 4 === 0 ? .11 : .04;
  lines += `<path d="M${x + .5} 0V909" stroke="#fff" stroke-opacity="${o}"/>`;
}
rows.insertAdjacentHTML('beforeend', `<svg class="gridlines" width="1442" height="909">${lines}</svg>
<div class="shade"></div><div class="fade t"></div><div class="fade b"></div><div class="divider"></div>
<div class="cursor" style="left:121px"></div><div class="cursor" style="left:189px"></div><div class="cursor play" style="left:1081px"></div>
<svg class="flag" style="left:121px" width="9" height="11"><path d="M0 0h6l3 5.500L6 11H0z" fill="#91d590"/><path d="M4 3v5" stroke="#143"/></svg>
<svg class="flag" style="left:182px" width="9" height="11"><path d="M9 0H3L0 5.500 3 11h6z" fill="#91d590"/><path d="M7.500 3.500q-3-1-3 2t3 2" fill="none" stroke="#143"/></svg>
<svg class="flag" style="left:1081px" width="9" height="34"><path d="M.5 0v17" stroke="#777"/><path d="M0 16h5l4 5-4 5H0z" fill="#09f5d0"/></svg>`);

// MIDI editor
const ROW = 27.375, BEAT = 127.87, X0 = 51;
const NAMES = ['C', 'C#', 'D', 'D#', 'E', 'F', 'F#', 'G', 'G#', 'A', 'A#', 'B'];
const bed = document.getElementById('keybed'), grid = document.getElementById('egrid'), er = document.getElementById('eruler');
for (let k = 0; k < 19; k++) add(bed, 'i', '', { top: (3 + k * 46.93).toFixed(0) + 'px' });
let hl = '';
for (let i = 0; i < 33; i++) {
  const midi = 42 - i, nm = NAMES[midi % 12], y = Math.round(i * ROW), y2 = Math.round((i + 1) * ROW);
  const sharp = nm.includes('#');
  add(grid, 'div', 'prow' + (sharp ? ' blk' : ''), { top: y + 'px', height: y2 - y + 'px' }, i < 32 ? nm + Math.floor(midi / 12) : '');
  if (sharp) add(bed, 'u', '', { top: y + 'px' });
  if (nm === 'C') {
    hl += `<path d="M0 ${y2 + .5}H1023" stroke="#0c0d0c"/>`;
    add(bed, 'span', '', { top: (y2 - 17) + 'px' }, nm + Math.floor(midi / 12));
  }
  if (nm === 'F') hl += `<path d="M0 ${y2 + .5}H1023" stroke="#252725"/>`;
}
let vl = '';
for (let e = -3; X0 + e * BEAT / 8 < 1023; e++) {
  const x = Math.round(X0 + e * BEAT / 8) - (e === 0 ? 1 : 0), m = ((e % 8) + 8) % 8;
  const o = e === 32 ? .38 : m === 0 ? .27 : m === 4 ? .2 : m % 2 === 0 ? .13 : .035;
  vl += `<path d="M${x + .5} 0V887" stroke="#fff" stroke-opacity="${o}"/>`;
  const h = e === 0 ? 15 : e === 32 ? 13 : m === 0 ? 11 : m === 4 ? 9 : m % 2 === 0 ? 7 : 5;
  const c = e === 0 ? '#fff' : e === 32 ? '#ddd' : m === 0 ? '#b5b5b5' : m === 4 ? '#999' : m % 2 === 0 ? '#767876' : '#525452';
  add(er, 'i', '', { left: x + 'px', height: h + 'px', background: c });
  if (m === 0 && e >= 0) {
    const beat = e / 8 % 4, bar = 29 + Math.floor(e / 32);
    const s = e === 0 ? ['13px', '8px', '#fff'] : beat === 0 ? ['12px', '10px', '#c8c8c8'] : ['11.5px', '12px', '#8f918f'];
    add(er, 'span', '', { left: x + 1 + 'px', fontSize: s[0], top: s[1], color: s[2], letterSpacing: '-.6px' }, beat === 0 ? 'Bar ' + bar : bar + '|' + (beat + 1));
  }
}
grid.insertAdjacentHTML('beforeend', `<svg width="1023" height="887">${hl}${vl}</svg>`);
const notes = [[0, 16], [1, 16], [2, 16], [3, 16], [4, 16], [5, 16], [6, 16], [7, 16], [2, 17], [6, 17], [0, 18], [5, 18]];
notes.forEach(([b, r]) => {
  const x = Math.round(X0 + b * BEAT), w = Math.round(X0 + (b + 1) * BEAT) - x;
  add(grid, 'div', 'note', { left: x + 'px', width: w + 'px', top: Math.round(r * ROW - .5) + 'px' }, ['D2', 'C#2', 'C2'][r - 16]);
});
add(grid, 'div', 'eplay');
```
